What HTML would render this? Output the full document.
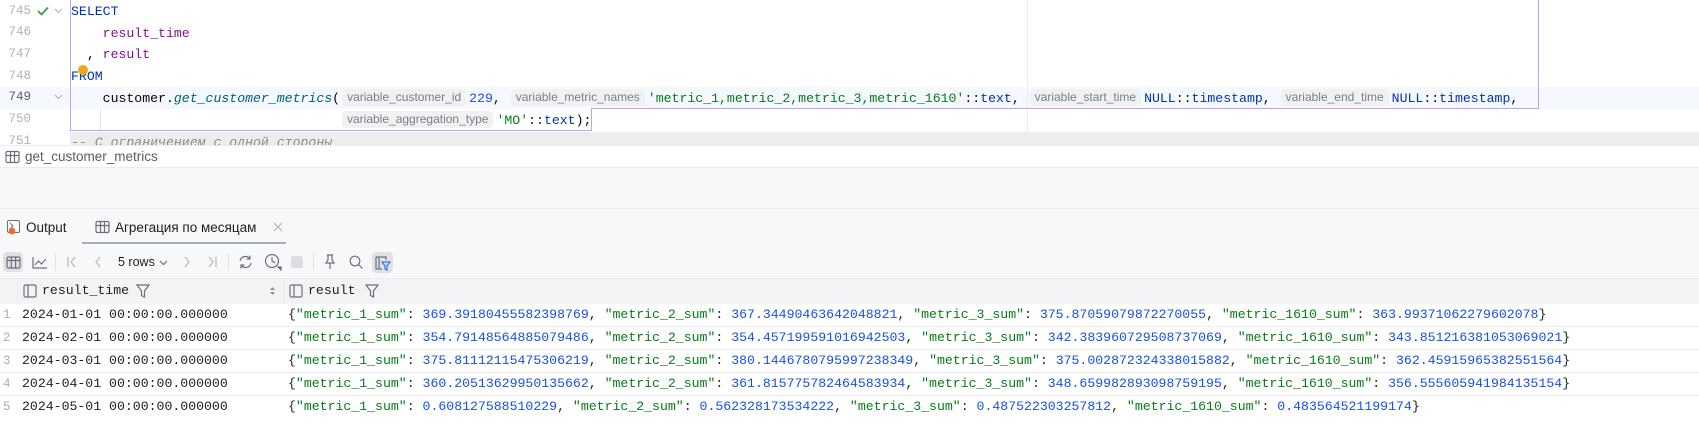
<!DOCTYPE html>
<html><head><meta charset="utf-8"><style>
*{margin:0;padding:0;box-sizing:border-box}
body{width:1699px;height:430px;overflow:hidden;background:#fff;position:relative;font-family:"Liberation Sans","Noto Sans CJK SC",sans-serif}
.a{position:absolute}
.m{font-family:"Liberation Mono",monospace;font-size:13.2px;white-space:pre}
.ln{position:absolute;left:0;width:31px;text-align:right;color:#aeb3c2;font-family:"Liberation Mono",monospace;font-size:12.5px}
.cl{position:absolute;left:71px;height:21.7px;line-height:21.7px}
.kw{color:#0033b3}.col{color:#871094}.fn{color:#00627a;font-style:italic}.num{color:#1750eb}.str{color:#067d17}
.ih{display:inline-block;font-family:"Liberation Sans",sans-serif;font-size:12px;color:#7a7e85;background:#f0f1f3;border-radius:4px;padding:0 5px;line-height:17px;margin:0 3px 0 2px;vertical-align:1px}
.row{position:absolute;left:0;width:1699px;height:23px;border-bottom:1px solid #ebecf0;line-height:22px}
.rn{position:absolute;left:3px;color:#a8adb8;font-family:"Liberation Mono",monospace;font-size:12.5px}
.c1{position:absolute;left:22px;color:#1e1f22}
.c2{position:absolute;left:288px;color:#1e1f22}
.ic{position:absolute;stroke:#6c707e;fill:none;stroke-width:1.2}
</style></head><body>
<!-- editor -->
<div class="a" style="left:0;top:87px;width:1699px;height:22px;background:#f5f8fe"></div>
<div class="a" style="left:70px;top:132px;width:1629px;height:13px;background:#ededed"></div>
<div class="a" style="left:1027px;top:0;width:1px;height:132px;background:#ebecf0"></div>
<div class="a" style="left:100px;top:109px;width:1px;height:22px;background:#e4e5e8"></div>
<!-- selection box -->
<div class="a" style="left:70px;top:-2px;width:1469px;height:111px;border:1px solid #b7a6f0;border-bottom:none"></div>
<div class="a" style="left:591px;top:108px;width:948px;height:1px;background:#b7a6f0"></div>
<div class="a" style="left:70px;top:108px;width:522px;height:23px;border:1px solid #b7a6f0;border-top:none"></div>

<div class="ln" style="top:3px;line-height:17px">745</div>
<div class="ln" style="top:24px;line-height:17px">746</div>
<div class="ln" style="top:46px;line-height:17px">747</div>
<div class="ln" style="top:68px;line-height:17px">748</div>
<div class="ln" style="top:89px;line-height:17px;color:#5c5f66">749</div>
<div class="ln" style="top:111px;line-height:17px">750</div>
<div class="ln" style="top:133px;line-height:17px">751</div>
<svg class="a" style="left:37px;top:6px" width="12" height="10"><path d="M1 5l3.5 3.5L11 1.5" stroke="#3d9a50" stroke-width="1.8" fill="none"/></svg>
<svg class="a" style="left:54px;top:8px" width="9" height="6"><path d="M1 1l3.5 3.5L8 1" stroke="#a8adb8" fill="none"/></svg>
<svg class="a" style="left:54px;top:94px" width="9" height="6"><path d="M1 1l3.5 3.5L8 1" stroke="#a8adb8" fill="none"/></svg>

<div class="cl m" style="top:1px"><span class="kw">SELECT</span></div>
<div class="cl m" style="top:22.7px">    <span class="col">result_time</span></div>
<div class="cl m" style="top:44.4px">  , <span class="col">result</span></div>
<div class="cl m" style="top:66px"><span class="kw">FROM</span></div>
<div class="a" style="left:78px;top:65px;width:10px;height:10px;border-radius:50%;background:#f2a619"></div>
<div class="cl m" style="top:87.8px;color:#080808">    customer.<span class="fn">get_customer_metrics</span>(<span class="ih">variable_customer_id</span><span class="num">229</span>, <span class="ih">variable_metric_names</span><span class="str">'metric_1,metric_2,metric_3,metric_1610'</span>::<span class="kw">text</span>, <span class="ih">variable_start_time</span><span class="kw">NULL</span>::<span class="kw">timestamp</span>, <span class="ih">variable_end_time</span><span class="kw">NULL</span>::<span class="kw">timestamp</span>,</div>
<div class="a m" style="left:340px;top:109.5px;line-height:21.7px;color:#080808"><span class="ih">variable_aggregation_type</span><span class="str">'MO'</span>::<span class="kw">text</span>);</div>
<div class="a m" style="left:71px;top:132px;height:13px;overflow:hidden;line-height:21.7px;color:#8c8c8c;font-style:italic">-- С ограничением с одной стороны</div>

<!-- breadcrumb -->
<div class="a" style="left:0;top:145px;width:1699px;height:23px;background:#fff;border-top:1px solid #ebecf0;border-bottom:1px solid #ebecf0"></div>
<svg class="ic" style="left:5px;top:150px" width="15" height="14"><rect x="1" y="1.5" width="13" height="11" rx="1.5"/><path d="M1 5.5h13M5.5 1.5v11M9.5 1.5v11"/></svg>
<div class="a" style="left:25px;top:147px;font-size:13.5px;color:#5a5d63;line-height:20px">get_customer_metrics</div>

<div class="a" style="left:0;top:168px;width:1699px;height:41px;background:#f7f8fa;border-bottom:1px solid #ebecf0"></div>
<!-- tabs -->
<div class="a" style="left:0;top:209px;width:1699px;height:209px;background:#f7f8fa"></div>
<svg class="a" style="left:6px;top:219px" width="16" height="16"><rect x="1.5" y="1.5" width="12" height="12" rx="1.5" stroke="#6c707e" fill="none"/><path d="M4 4l3 3-3 3" stroke="#6c707e" fill="none"/><circle cx="6" cy="12" r="3.3" fill="#e8702a"/></svg>
<div class="a" style="left:26px;top:219px;font-size:13.5px;color:#1e1f22;line-height:18px">Output</div>
<svg class="ic" style="left:95px;top:220px" width="15" height="14"><rect x="1" y="1.5" width="13" height="11" rx="1.5"/><path d="M1 5.5h13M5.5 1.5v11M9.5 1.5v11"/></svg>
<div class="a" style="left:115px;top:219px;font-size:13.5px;color:#1e1f22;line-height:18px">Агрегация по месяцам</div>
<svg class="a" style="left:273px;top:222px" width="10" height="10"><path d="M1 1l8 8M9 1l-8 8" stroke="#a8adb8" stroke-width="1.1"/></svg>
<div class="a" style="left:82px;top:242px;width:204px;height:2px;background:#a6adbb"></div>

<!-- toolbar -->
<div class="a" style="left:3px;top:252px;width:20px;height:20px;border-radius:4px;background:#dfe1e5"></div>
<svg class="ic" style="left:6px;top:256px" width="15" height="13"><rect x="1" y="1" width="13" height="11" rx="1.5"/><path d="M1 4.5h13M5.3 1v11M9.6 1v11"/></svg>
<svg class="ic" style="left:32px;top:256px" width="16" height="13"><path d="M1 1v11h14M3 9l3.5-4 3 3 4.5-5"/></svg>
<div class="a" style="left:55px;top:253px;width:1px;height:18px;background:#dfe1e5"></div>
<svg class="ic" style="left:67px;top:256px;stroke:#b4b8bf" width="10" height="12"><path d="M1 1v10M8 1L4 6l4 5"/></svg>
<svg class="ic" style="left:94px;top:256px;stroke:#b4b8bf" width="8" height="12"><path d="M6 1L2 6l4 5"/></svg>
<div class="a" style="left:118px;top:254px;font-size:12.5px;color:#1e1f22;line-height:16px">5 rows</div>
<svg class="ic" style="left:159px;top:260px" width="9" height="6"><path d="M1 1l3.5 3.5L8 1"/></svg>
<svg class="ic" style="left:183px;top:256px;stroke:#b4b8bf" width="8" height="12"><path d="M2 1l4 5-4 5"/></svg>
<svg class="ic" style="left:207px;top:256px;stroke:#b4b8bf" width="10" height="12"><path d="M2 1l4 5-4 5M9 1v10"/></svg>
<div class="a" style="left:228px;top:253px;width:1px;height:18px;background:#dfe1e5"></div>
<svg class="ic" style="left:237px;top:254px" width="17" height="16"><path d="M3 7a5.5 5.5 0 0 1 10-2M14 9a5.5 5.5 0 0 1-10 2M13 1.5V5H9.5M4 14.5V11h3.5"/></svg>
<svg class="ic" style="left:264px;top:253px" width="18" height="18"><circle cx="8" cy="8" r="6.5"/><path d="M8 4v4l3 2"/><path d="M14 14h3v3z" fill="#6c707e"/></svg>
<div class="a" style="left:291px;top:256px;width:12px;height:12px;border-radius:2px;background:#dcdee2"></div>
<div class="a" style="left:313px;top:253px;width:1px;height:18px;background:#dfe1e5"></div>
<svg class="ic" style="left:324px;top:254px" width="12" height="16"><path d="M3 1h6M4 1v5L2 9h8L8 6V1M6 9v6"/></svg>
<svg class="ic" style="left:349px;top:255px" width="15" height="15"><circle cx="6" cy="6" r="4.8"/><path d="M9.5 9.5l4 4"/></svg>
<div class="a" style="left:372px;top:252px;width:21px;height:21px;border-radius:4px;background:#dfe1e5"></div>
<svg class="a" style="left:375px;top:256px" width="16" height="15"><path d="M1 1h10v3M1 1v12h6M4 1v12" stroke="#6c707e" fill="none" stroke-width="1.2"/><path d="M7 6h8l-3 4v4l-2-1v-3z" stroke="#3574f0" fill="none" stroke-width="1.2"/></svg>

<!-- table header -->
<div class="a" style="left:0;top:278px;width:1699px;height:26px;background:#f2f3f5;border-top:1px solid #ebecf0"></div>
<div class="a" style="left:17px;top:278px;width:1px;height:140px;background:#ebecf0"></div>
<div class="a" style="left:283px;top:278px;width:1px;height:140px;background:#ebecf0"></div>
<svg class="ic" style="left:23px;top:284px" width="14" height="14"><rect x="1" y="1" width="12" height="12" rx="1.5"/><path d="M5 1v12"/></svg>
<div class="a m" style="left:42px;top:282px;line-height:18px;color:#1e1f22">result_time</div>
<svg class="ic" style="left:136px;top:284px" width="14" height="14"><path d="M1 1h12L8.5 7v6l-3-1.5V7z"/></svg>
<svg class="a" style="left:269px;top:286px" width="7" height="10"><path d="M1 4l2.5-3L6 4zM1 6l2.5 3L6 6z" fill="#8c9099"/></svg>
<svg class="ic" style="left:289px;top:284px" width="14" height="14"><rect x="1" y="1" width="12" height="12" rx="1.5"/><path d="M5 1v12"/></svg>
<div class="a m" style="left:308px;top:282px;line-height:18px;color:#1e1f22">result</div>
<svg class="ic" style="left:365px;top:284px" width="14" height="14"><path d="M1 1h12L8.5 7v6l-3-1.5V7z"/></svg>

<!-- rows -->
<div style="position:absolute;left:0;top:304px;width:1699px;height:114px;background:#fff"></div>
<div class="row m" style="top:304px"><span class="rn">1</span><span class="c1">2024-01-01 00:00:00.000000</span><span class="c2">{<span class="str">"metric_1_sum"</span>: <span class="num">369.39180455582398769</span>, <span class="str">"metric_2_sum"</span>: <span class="num">367.34490463642048821</span>, <span class="str">"metric_3_sum"</span>: <span class="num">375.87059079872270055</span>, <span class="str">"metric_1610_sum"</span>: <span class="num">363.99371062279602078</span>}</span></div>
<div class="row m" style="top:327px"><span class="rn">2</span><span class="c1">2024-02-01 00:00:00.000000</span><span class="c2">{<span class="str">"metric_1_sum"</span>: <span class="num">354.7914856488507948</span><span class="num">6</span>, <span class="str">"metric_2_sum"</span>: <span class="num">354.45719959101694250</span><span class="num">3</span>, <span class="str">"metric_3_sum"</span>: <span class="num">342.38396072950873706</span><span class="num">9</span>, <span class="str">"metric_1610_sum"</span>: <span class="num">343.85121638105306902</span><span class="num">1</span>}</span></div>
<div class="row m" style="top:350px"><span class="rn">3</span><span class="c1">2024-03-01 00:00:00.000000</span><span class="c2">{<span class="str">"metric_1_sum"</span>: <span class="num">375.81112115475306219</span>, <span class="str">"metric_2_sum"</span>: <span class="num">380.1446780795997238349</span>, <span class="str">"metric_3_sum"</span>: <span class="num">375.002872324338015882</span>, <span class="str">"metric_1610_sum"</span>: <span class="num">362.45915965382551564</span>}</span></div>
<div class="row m" style="top:373px"><span class="rn">4</span><span class="c1">2024-04-01 00:00:00.000000</span><span class="c2">{<span class="str">"metric_1_sum"</span>: <span class="num">360.20513629950135662</span>, <span class="str">"metric_2_sum"</span>: <span class="num">361.815775782464583934</span>, <span class="str">"metric_3_sum"</span>: <span class="num">348.659982893098759195</span>, <span class="str">"metric_1610_sum"</span>: <span class="num">356.555605941984135154</span>}</span></div>
<div class="row m" style="top:396px"><span class="rn">5</span><span class="c1">2024-05-01 00:00:00.000000</span><span class="c2">{<span class="str">"metric_1_sum"</span>: <span class="num">0.608127588510229</span>, <span class="str">"metric_2_sum"</span>: <span class="num">0.562328173534222</span>, <span class="str">"metric_3_sum"</span>: <span class="num">0.487522303257812</span>, <span class="str">"metric_1610_sum"</span>: <span class="num">0.483564521199174</span>}</span></div>
<div class="a" style="left:0;top:418px;width:1699px;height:12px;background:#fff"></div>
</body></html>
